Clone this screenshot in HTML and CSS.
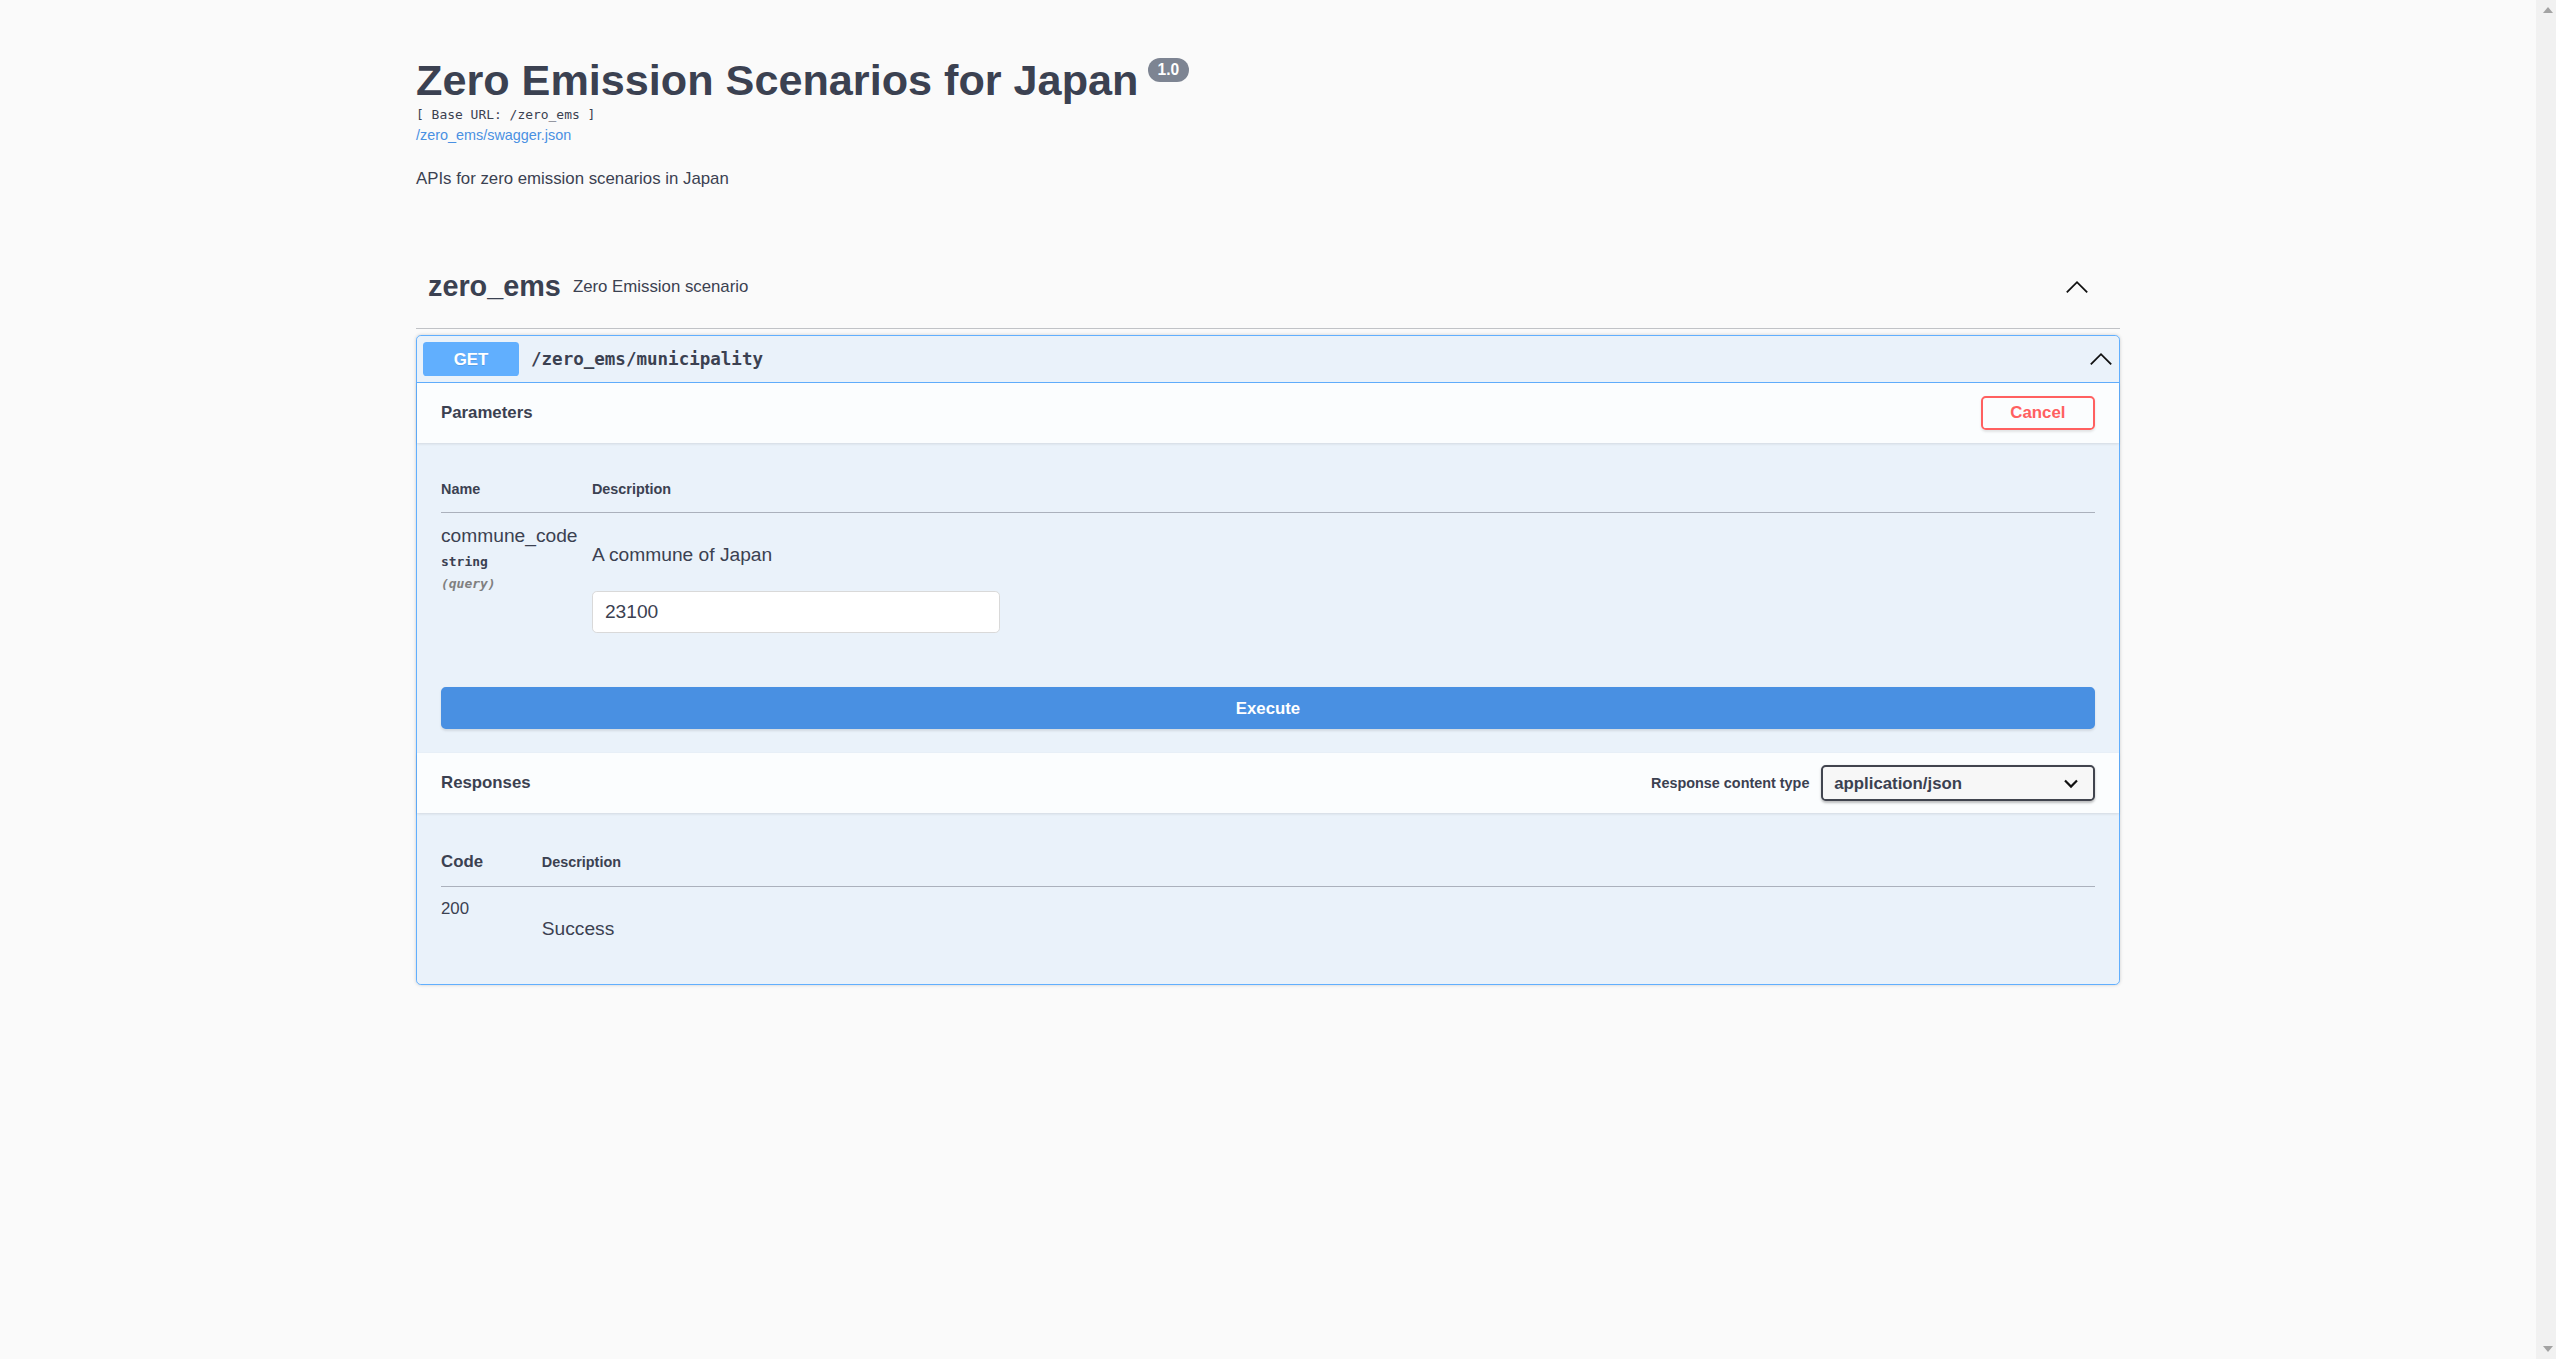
FILE: index.html
```html
<!DOCTYPE html>
<html lang="en">
<head>
<meta charset="utf-8">
<title>Zero Emission Scenarios for Japan</title>
<link rel="stylesheet" href="styles.css">
</head>
<body>
<div class="swagger-ui">
  <section class="wrapper">
    <div class="info">
      <hgroup class="main">
        <h2 class="title">Zero Emission Scenarios for Japan<span class="version">1.0</span></h2>
        <pre class="base-url">[ Base URL: /zero_ems ]</pre>
        <a class="spec-link" href="#">/zero_ems/swagger.json</a>
      </hgroup>
      <div class="description"><p>APIs for zero emission scenarios in Japan</p></div>
    </div>
  </section>

  <section class="wrapper">
    <div class="tag-section">
      <h4 class="opblock-tag">
        <span class="tag-name">zero_ems</span>
        <small class="tag-desc">Zero Emission scenario</small>
        <button class="expand" type="button" aria-label="Collapse">
          <svg class="chevron" width="20" height="20" viewBox="0 0 20 20"><polyline points="1.5,14.5 10,6 18.5,14.5"/></svg>
        </button>
      </h4>

      <div class="opblock">
        <div class="opblock-summary">
          <span class="method">GET</span>
          <span class="path">/zero_ems/municipality</span>
          <svg class="chevron" width="20" height="20" viewBox="0 0 20 20"><polyline points="1.5,14.5 10,6 18.5,14.5"/></svg>
        </div>

        <div class="opblock-body">
          <div class="section-header">
            <h4>Parameters</h4>
            <button class="btn cancel" type="button">Cancel</button>
          </div>

          <div class="table-container">
            <table class="parameters">
              <thead>
                <tr>
                  <th class="col-name">Name</th>
                  <th class="col-desc">Description</th>
                </tr>
              </thead>
              <tbody>
                <tr>
                  <td class="col-name">
                    <div class="param-name">commune_code</div>
                    <div class="param-type">string</div>
                    <div class="param-in">(query)</div>
                  </td>
                  <td class="col-desc">
                    <div class="markdown"><p>A commune of Japan</p></div>
                    <input class="text-input" type="text" value="23100">
                  </td>
                </tr>
              </tbody>
            </table>
          </div>

          <div class="execute-wrapper">
            <button class="btn execute" type="button">Execute</button>
          </div>

          <div class="section-header">
            <h4>Responses</h4>
            <label class="content-type">
              <span class="content-type-label">Response content type</span>
              <span class="select-wrap">
                <select class="select"><option>application/json</option></select>
                <svg class="select-arrow" width="20" height="20" viewBox="0 0 20 20"><polyline points="5,8 10,13 15,8"/></svg>
              </span>
            </label>
          </div>

          <div class="responses-inner">
            <table class="responses-table">
              <thead>
                <tr>
                  <th class="col-status">Code</th>
                  <th class="col-desc">Description</th>
                </tr>
              </thead>
              <tbody>
                <tr>
                  <td class="col-status">200</td>
                  <td class="col-desc"><div class="markdown"><p>Success</p></div></td>
                </tr>
              </tbody>
            </table>
          </div>
        </div>
      </div>
    </div>
  </section>
</div>
<div class="scrollbar" aria-hidden="true"><span class="sb-arrow sb-up"></span><span class="sb-arrow sb-down"></span></div>
</body>
</html>
```

FILE: styles.css
```css
html {
  background: #fafafa;
}

body {
  margin: 0;
  padding-right: 20px;
  background: #fafafa;
  font-family: "Liberation Sans", Arial, sans-serif;
  color: #3b4151;
}

.swagger-ui {
  zoom: 1.2;
}

.wrapper {
  box-sizing: border-box;
  max-width: 1460px;
  margin: 0 auto;
  padding: 0 20px;
}

/* ---------- fake classic scrollbar ---------- */
.scrollbar {
  position: fixed;
  top: 0;
  right: 0;
  bottom: 0;
  width: 20px;
  display: flex;
  flex-direction: column;
  justify-content: space-between;
  padding: 7px 0;
  box-sizing: border-box;
  background: #f1f1f1;
}

.sb-arrow {
  width: 0;
  height: 0;
  margin-left: 7px;
  border-left: 5.5px solid transparent;
  border-right: 5.5px solid transparent;
}

.sb-up {
  border-bottom: 6px solid #a3a3a3;
}

.sb-down {
  border-top: 6px solid #a3a3a3;
}

/* ---------- info ---------- */
.info {
  padding: 47px 0 47px;
}

.main {
  margin: 0 0 20px;
}

.title {
  margin: 0;
  font-size: 36px;
  font-weight: 700;
  line-height: 40px;
  color: #3b4151;
}

.version {
  display: inline-block;
  vertical-align: top;
  height: 20px;
  margin: 1px 0 0 8px;
  padding: 0 8px;
  border-radius: 57px;
  background: #7d8492;
  color: #fff;
  font-size: 13px;
  font-weight: 700;
  line-height: 20px;
}

.base-url {
  margin: 2px 0 0;
  font-family: "DejaVu Sans Mono", monospace;
  font-size: 10.8px;
  line-height: 14px;
  color: #3b4151;
}

.spec-link {
  display: block;
  margin-top: 2px;
  font-size: 12px;
  line-height: 16px;
  color: #4990e2;
  text-decoration: none;
}

.description p {
  margin: 0;
  font-size: 14px;
  color: #3b4151;
}

/* ---------- tag ---------- */
.tag-section {
  display: flex;
  flex-direction: column;
}

.opblock-tag {
  display: flex;
  align-items: center;
  margin: 0 0 5px;
  padding: 10px 20px 10px 10px;
  border-bottom: 1px solid rgba(59, 65, 81, 0.3);
  font-size: 24px;
  font-weight: 700;
  color: #3b4151;
}

.tag-desc {
  flex: 1;
  padding: 14px 10px;
  font-size: 14px;
  font-weight: 400;
  line-height: 21px;
}

.expand {
  display: flex;
  padding: 0 6px;
  border: none;
  background: none;
}

.chevron {
  display: block;
  fill: none;
  stroke: #111;
  stroke-width: 1.5;
}

/* ---------- operation block ---------- */
.opblock {
  margin: 0 0 15px;
  border: 1px solid #61affe;
  border-radius: 4px;
  background: rgba(97, 175, 254, 0.1);
  box-shadow: 0 0 3px rgba(0, 0, 0, 0.19);
}

.opblock-summary {
  display: flex;
  align-items: center;
  padding: 5px;
  border-bottom: 1px solid #61affe;
}

.method {
  box-sizing: border-box;
  min-width: 80px;
  padding: 6px 15px;
  border-radius: 3px;
  background: #61affe;
  color: #fff;
  font-size: 14px;
  font-weight: 700;
  line-height: 16px;
  text-align: center;
  text-shadow: 0 1px 0 rgba(0, 0, 0, 0.1);
}

.path {
  flex: 1;
  padding: 0 10px;
  font-family: "DejaVu Sans Mono", monospace;
  font-size: 14.6px;
  font-weight: 700;
  color: #3b4151;
}

.section-header {
  box-sizing: border-box;
  display: flex;
  align-items: center;
  min-height: 50px;
  padding: 8px 20px;
  background: rgba(255, 255, 255, 0.8);
  box-shadow: 0 1px 2px rgba(0, 0, 0, 0.1);
}

.section-header h4 {
  flex: 1;
  margin: 0;
  font-size: 14px;
  font-weight: 700;
  color: #3b4151;
}

.btn {
  padding: 5px 23px;
  border: 2px solid gray;
  border-radius: 4px;
  background: transparent;
  box-shadow: 0 1px 2px rgba(0, 0, 0, 0.1);
  font-family: "Liberation Sans", Arial, sans-serif;
  font-size: 14px;
  font-weight: 700;
  line-height: 15px;
  color: #3b4151;
}

.btn.cancel {
  border-color: #ff6060;
  color: #ff6060;
}

.table-container {
  padding: 20px;
}

table {
  width: 100%;
  border-collapse: collapse;
}

th {
  padding: 12px 0;
  border-bottom: 1px solid rgba(59, 65, 81, 0.2);
  font-size: 12px;
  font-weight: 700;
  text-align: left;
  color: #3b4151;
}

td {
  padding: 10px 0 0;
  vertical-align: top;
}

.parameters .col-name {
  width: 1%;
  white-space: nowrap;
}

td.col-name {
  padding: 10px 0;
}

.param-name {
  margin-right: 0.75em;
  font-size: 16px;
  color: #3b4151;
}

.param-type {
  padding: 6px 0 4px;
  font-family: "DejaVu Sans Mono", monospace;
  font-size: 10.8px;
  font-weight: 600;
  line-height: 14px;
  color: #3b4151;
}

.param-in {
  font-family: "DejaVu Sans Mono", monospace;
  font-size: 10.8px;
  font-style: italic;
  font-weight: 600;
  line-height: 14px;
  color: gray;
}

.markdown p {
  margin: 16px 0;
  font-size: 16px;
  color: #3b4151;
}

.text-input {
  box-sizing: border-box;
  display: block;
  width: 100%;
  max-width: 340px;
  height: 35px;
  margin: 21px 0 5px;
  padding: 8px 10px;
  border: 1px solid #d9d9d9;
  border-radius: 4px;
  background: #fff;
  font-family: "Liberation Sans", Arial, sans-serif;
  font-size: 16px;
  line-height: 16px;
  color: #3b4151;
}

.execute-wrapper {
  padding: 20px;
}

.btn.execute {
  display: block;
  width: 100%;
  padding: 8px 40px;
  border-color: #4990e2;
  background: #4990e2;
  color: #fff;
  line-height: 16px;
}

.content-type {
  display: flex;
  align-items: center;
}

.content-type-label {
  margin-right: 10px;
  font-size: 12px;
  font-weight: 700;
  color: #3b4151;
}

.select-wrap {
  position: relative;
  display: block;
}

.select {
  box-sizing: border-box;
  display: block;
  width: 228px;
  height: 30px;
  padding: 0 40px 0 9px;
  border: 2px solid #41444e;
  border-radius: 4px;
  background: #f7f7f7;
  box-shadow: 0 1px 2px 0 rgba(0, 0, 0, 0.25);
  font-family: "Liberation Sans", Arial, sans-serif;
  font-size: 14px;
  font-weight: 700;
  color: #3b4151;
  appearance: none;
  -webkit-appearance: none;
}

.select-arrow {
  position: absolute;
  top: 5px;
  right: 10px;
  fill: none;
  stroke: #111;
  stroke-width: 1.8;
  pointer-events: none;
}

.responses-inner {
  padding: 20px;
}

.responses-table .col-status {
  width: 84px;
  min-width: 84px;
}

.responses-table th.col-status {
  font-size: 14px;
}

.responses-table td.col-status {
  padding: 10px 0;
  font-size: 14px;
  color: #3b4151;
}
```
